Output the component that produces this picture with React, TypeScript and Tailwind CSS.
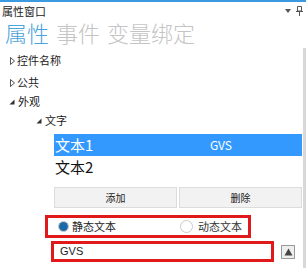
import React from "react";

const cjk = { fontFamily: '"Noto Sans CJK SC", "Noto Sans", sans-serif' };

function TreeRow({ open, label, indent }: { open: boolean; label: string; indent: string }) {
  return (
    <div className={`flex items-center h-[19px] ${indent}`}>
      {open ? (
        <svg width="6" height="6" viewBox="0 0 6 6" className="mr-[3px]">
          <path d="M5.5 0.5 L5.5 5.5 L0.5 5.5 Z" fill="#333" />
        </svg>
      ) : (
        <svg width="5" height="8" viewBox="0 0 5 8" className="mr-[2px]">
          <path d="M0.5 0.5 L4.5 4 L0.5 7.5 Z" fill="none" stroke="#555" strokeWidth="1" />
        </svg>
      )}
      <span className="text-[11px] leading-[19px] text-[#222]">{label}</span>
    </div>
  );
}

export default function App() {
  return (
    <div className="w-[306px] h-[268px] bg-white overflow-hidden relative" style={cjk}>
      <div className="h-[2px] bg-[#3c9be0]" />
      <div className="flex items-center justify-between h-[16px] pl-[2px] pr-[3px] mt-[1px]">
        <span className="text-[11px] text-[#222] leading-[14px]">属性窗口</span>
        <div className="flex items-center gap-[5px] text-[#555]">
          <svg width="6" height="4" viewBox="0 0 6 4">
            <path d="M0 0 L6 0 L3 4 Z" fill="#555" />
          </svg>
          <svg width="7" height="10" viewBox="0 0 7 10">
            <path d="M1.5 0.5 H5.5 V5 H1.5 Z M0 5.5 H7 M3.5 5.5 V10" fill="none" stroke="#555" strokeWidth="1" />
          </svg>
        </div>
      </div>
      <div className="flex items-center gap-[7px] pl-[5px] h-[26px] text-[22px] leading-[24px] font-light">
        <span className="text-[#4aa3dc]">属性</span>
        <span className="text-[#c4c4c4]">事件</span>
        <span className="text-[#c4c4c4]">变量绑定</span>
      </div>
      <div className="absolute right-0 top-[48px] w-[3px] h-[220px] bg-[#d8d8d8]" />
      <div className="mt-[6px]">
        <TreeRow open={false} label="控件名称" indent="pl-[10px]" />
        <div className="h-[3px]" />
        <TreeRow open={false} label="公共" indent="pl-[10px]" />
        <TreeRow open label="外观" indent="pl-[9px]" />
        <TreeRow open label="文字" indent="pl-[36px]" />
      </div>
      <div className="ml-[54px] mr-[4px] mt-[4px]">
        <div className="flex items-center h-[22px] bg-[#3399ff] text-white">
          <span className="w-[156px] pl-[1px] text-[15px] leading-[22px]">文本1</span>
          <span className="text-[12px] leading-[22px]">GVS</span>
        </div>
        <div className="flex items-center h-[22px] text-[#111]">
          <span className="pl-[1px] text-[15px] leading-[22px]">文本2</span>
        </div>
        <div className="flex gap-[2px] mt-[9px]">
          <button className="flex-1 h-[21px] bg-[#f2f2f2] border border-[#dcdcdc] text-[10px] text-[#222]">添加</button>
          <button className="flex-1 h-[21px] bg-[#f2f2f2] border border-[#dcdcdc] text-[10px] text-[#222]">删除</button>
        </div>
      </div>
      <div className="ml-[45px] mt-[7px] w-[206px] h-[23px] border-[3px] border-[#e01a1a] flex items-center">
        <div className="flex items-center w-[132px] pl-[10px]">
          <span className="w-[11px] h-[11px] rounded-full border border-[#bbb] bg-white flex items-center justify-center">
            <span className="w-[9px] h-[9px] rounded-full bg-[#1b6aa8]" />
          </span>
          <span className="ml-[3px] text-[11px] text-[#222]">静态文本</span>
        </div>
        <div className="flex items-center">
          <span className="w-[13px] h-[13px] rounded-full border border-[#ccc] bg-white" />
          <span className="ml-[5px] text-[11px] text-[#333]">动态文本</span>
        </div>
      </div>
      <div className="flex items-center mt-[3px]">
        <div className="ml-[51px] w-[223px] h-[21px] border-[3px] border-[#e01a1a] flex items-center pl-[6px]">
          <span className="text-[11px] text-[#222]" style={{ fontFamily: '"Liberation Sans", sans-serif' }}>GVS</span>
        </div>
        <div className="ml-[7px] w-[14px] h-[14px] border border-[#999] bg-[#eee] flex items-center justify-center">
          <svg width="9" height="8" viewBox="0 0 9 8">
            <path d="M4.5 0.5 L8.5 7.5 L0.5 7.5 Z" fill="#444" />
          </svg>
        </div>
      </div>
    </div>
  );
}
